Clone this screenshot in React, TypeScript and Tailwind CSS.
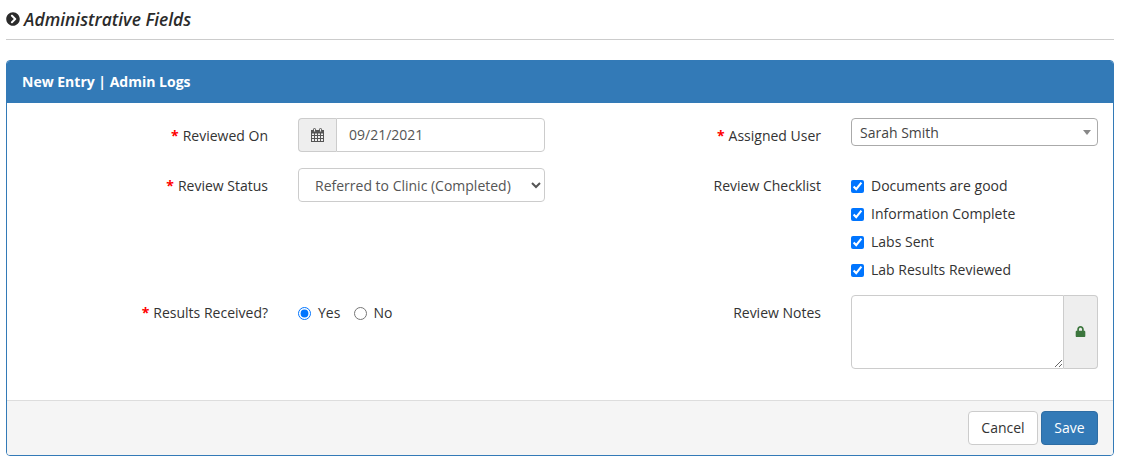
import { FaChevronCircleRight, FaLock } from "react-icons/fa";

function Required() {
  return <span className="text-[#ff0000] font-bold mr-1">*</span>;
}

function FieldLabel({ text, required }: { text: string; required?: boolean }) {
  return (
    <div className="pr-[30px] pt-2 text-right leading-5 text-[#333]">
      {required && <Required />}
      {text}
    </div>
  );
}

function CalendarIcon() {
  return (
    <svg width="13" height="14" viewBox="0 0 13 14" fill="none" stroke="#555" strokeWidth="1">
      <rect x="0.5" y="2.5" width="12" height="11" fill="#eee" />
      <rect x="0.5" y="2.5" width="12" height="2.5" fill="#555" />
      <path d="M3.5 5v8.5M6.5 5v8.5M9.5 5v8.5M0.5 7.5h12M0.5 10.5h12" />
      <rect x="2.5" y="0.5" width="2" height="3.5" rx="0.8" fill="#eee" />
      <rect x="8.5" y="0.5" width="2" height="3.5" rx="0.8" fill="#eee" />
    </svg>
  );
}

const checklist = ["Documents are good", "Information Complete", "Labs Sent", "Lab Results Reviewed"];

export default function App() {
  return (
    <div className="ml-[6px] w-[1108px] font-['Open_Sans',sans-serif] text-sm text-[#333]">
      {/* Section title */}
      <div className="flex h-[39px] items-center gap-[4px] pb-[1px]">
        <FaChevronCircleRight className="shrink-0 text-[14px] text-[#2b2b2b]" />
        <h4 className="text-[17.5px] font-semibold italic text-[#2b2b2b]">Administrative Fields</h4>
      </div>
      <hr className="border-t border-[#ccc]" />

      {/* Panel */}
      <div className="mt-5 overflow-hidden rounded-[4px] border border-[#337ab7]">
        <div className="flex h-[42px] items-center bg-[#337ab7] px-[15px] text-sm font-bold text-white">
          New Entry | Admin Logs
        </div>

        <div className="grid grid-cols-[291px_247px_306px_247px] gap-y-4 pt-[15px] pb-[31px]">
          <FieldLabel text="Reviewed On" required />
          <div className="flex h-[34px]">
            <div className="flex w-[38px] shrink-0 items-center justify-center rounded-l-[4px] border border-r-0 border-[#ccc] bg-[#eee]">
              <CalendarIcon />
            </div>
            <input
              readOnly
              value="09/21/2021"
              className="w-full min-w-0 rounded-r-[4px] border border-[#ccc] bg-white px-3 text-sm text-[#555]"
            />
          </div>
          <FieldLabel text="Assigned User" required />
          <div className="relative h-7 rounded-[4px] border border-[#aaa] bg-white pl-2 leading-[28px] text-[#444]">
            Sarah Smith
            <span className="absolute right-[6px] top-[11px] h-0 w-0 border-x-4 border-t-[5px] border-x-transparent border-t-[#888]" />
          </div>

          <FieldLabel text="Review Status" required />
          <select
            defaultValue="completed"
            className="h-[34px] w-full rounded-[4px] border border-[#ccc] bg-white px-3 text-sm text-[#555]"
          >
            <option value="completed">Referred to Clinic (Completed)</option>
          </select>
          <FieldLabel text="Review Checklist" />
          <div className="flex h-[111px] flex-col pt-1">
            {checklist.map((item) => (
              <label key={item} className="flex h-7 shrink-0 items-center gap-[7px] text-[#333]">
                <input type="checkbox" defaultChecked className="m-0 h-[13px] w-[13px]" />
                {item}
              </label>
            ))}
          </div>

          <FieldLabel text="Results Received?" required />
          <div className="flex h-9 items-center">
            <label className="flex items-center gap-[7px]">
              <input type="radio" name="results" defaultChecked className="m-0 h-[13px] w-[13px]" />
              Yes
            </label>
            <label className="ml-[14px] flex items-center gap-[6px]">
              <input type="radio" name="results" className="m-0 h-[13px] w-[13px]" />
              No
            </label>
          </div>
          <FieldLabel text="Review Notes" />
          <div className="flex h-[74px]">
            <textarea className="h-full w-[213px] shrink-0 rounded-l-[4px] border border-[#ccc] bg-white" />
            <div className="flex flex-1 items-center justify-center rounded-r-[4px] border border-l-0 border-[#ccc] bg-[#eee] pb-[1px]">
              <FaLock className="text-[11px] text-[#3c763d]" />
            </div>
          </div>
        </div>

        {/* Footer */}
        <div className="flex h-[55px] items-start justify-end gap-[3px] border-t border-[#ddd] bg-[#f5f5f5] pt-[10px] pr-[15px]">
          <button className="h-[34px] w-[70px] rounded-[4px] border border-[#ccc] bg-white text-sm text-[#333]">
            Cancel
          </button>
          <button className="h-[34px] w-[57px] rounded-[4px] border border-[#2e6da4] bg-[#337ab7] text-sm text-white">
            Save
          </button>
        </div>
      </div>
    </div>
  );
}
